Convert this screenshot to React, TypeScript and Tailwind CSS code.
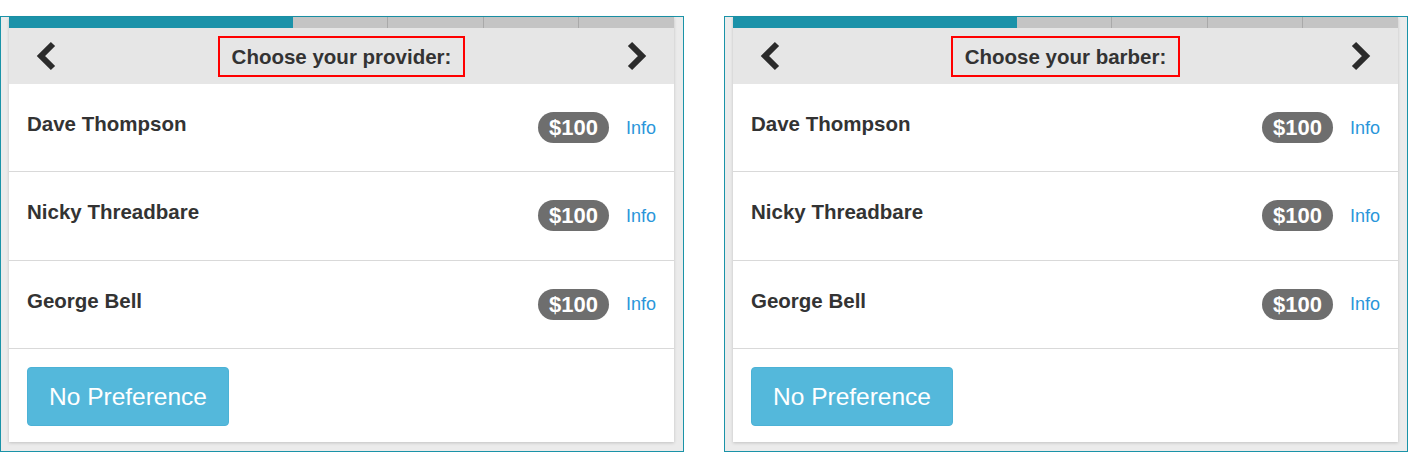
import React from "react";

const font = { fontFamily: '"Liberation Sans", Arial, Helvetica, sans-serif' };

function Chevron({ dir }: { dir: "left" | "right" }) {
  const pts = dir === "left" ? "19,4 7,16 19,28" : "5,4 17,16 5,28";
  return (
    <svg width="24" height="32" viewBox="0 0 24 32" className="shrink-0">
      <polyline
        points={pts}
        fill="none"
        stroke="#2b2b2b"
        strokeWidth="6"
        strokeLinejoin="miter"
        strokeLinecap="butt"
      />
    </svg>
  );
}

const people = ["Dave Thompson", "Nicky Threadbare", "George Bell"];

function Panel({ title }: { title: string }) {
  return (
    <div className="w-[684px] border border-[#1a93a8] bg-[#ebebeb] pl-2 pr-[9px] pb-[9px]">
      <div className="bg-white shadow-[0_1px_3px_rgba(0,0,0,0.18)]">
        <div className="flex h-[11px]">
          {[0, 1, 2, 3, 4, 5, 6].map((i) => (
            <div
              key={i}
              className={
                i < 3
                  ? "flex-1 bg-[#1b92a9]"
                  : i === 3
                  ? "flex-1 bg-[#c4c4c4]"
                  : "flex-1 bg-[#c4c4c4] border-l border-[#a9a9a9]"
              }
            />
          ))}
        </div>
        <div className="flex h-[56px] items-center justify-between bg-[#e6e6e6] px-[25px]">
          <Chevron dir="left" />
          <div className="border-2 border-[#ff0000] px-[12px] py-[6px] text-[20.5px] font-bold leading-[25px] text-[#333333]">
            {title}
          </div>
          <Chevron dir="right" />
        </div>
        {people.map((p, idx) => (
          <div
            key={p}
            className={
              idx === 0
                ? "flex items-start justify-between border-b border-[#d9d9d9] pl-[18px] pr-[18px] pt-[28px] pb-[28px]"
                : "flex items-start justify-between border-b border-[#d9d9d9] pl-[18px] pr-[18px] pt-[28px] pb-[28.5px]"
            }
          >
            <div className="text-[20.5px] font-bold leading-[24px] text-[#333333]">{p}</div>
            <div className="flex items-center gap-[17px]">
              <span className="rounded-full bg-[#6e6e6e] px-[11px] text-[22px] font-bold leading-[31px] text-white">
                $100
              </span>
              <span className="text-[18px] leading-[24px] text-[#2a96da]">Info</span>
            </div>
          </div>
        ))}
        <div className="pl-[18px] pt-[18px] pb-[16px]">
          <button className="rounded-[4px] border border-[#4cb2d6] bg-[#54b8db] px-[21px] py-[11px] text-[24.5px] leading-[35px] text-white">
            No Preference
          </button>
        </div>
      </div>
    </div>
  );
}

export default function App() {
  return (
    <div className="bg-white pt-4 w-[1408px] h-[467px]" style={font}>
      <div className="flex gap-[40px]">
        <Panel title="Choose your provider:" />
        <Panel title="Choose your barber:" />
      </div>
    </div>
  );
}
